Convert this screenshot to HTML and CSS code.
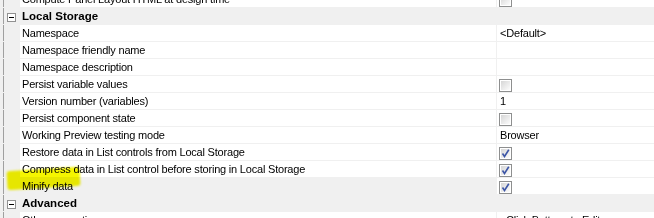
FILE: index.html
```html
<!DOCTYPE html>
<html lang="en">
<head>
  <meta charset="UTF-8" />
  <title>Property Grid</title>
  <link rel="stylesheet" href="styles.css">
</head>
<body>
  <svg width="0" height="0" class="defs">
    <defs>
      <linearGradient id="boxfill" x1="0" y1="0" x2="1" y2="1">
        <stop offset="0" stop-color="#d6d6d6"/>
        <stop offset="1" stop-color="#fcfcfc"/>
      </linearGradient>
      <symbol id="cb-off" viewBox="0 0 13 13">
        <rect x="0.5" y="0.5" width="12" height="12" fill="#fff" stroke="#8e8f8f"/>
        <rect x="2" y="2" width="9" height="9" fill="url(#boxfill)"/>
      </symbol>
      <symbol id="cb-on" viewBox="0 0 13 13">
        <rect x="0.5" y="0.5" width="12" height="12" fill="#fff" stroke="#8e8f8f"/>
        <rect x="2" y="2" width="9" height="9" fill="url(#boxfill)"/>
        <path d="M3.5 6.5 L5.5 9.5 L9.8 2.8" fill="none" stroke="#3d56a6" stroke-width="1.6"/>
      </symbol>
    </defs>
  </svg>

  <div class="grid">
    <div class="row">
      <div class="gutter"></div>
      <div class="name">Compute Panel Layout HTML at design time</div>
      <div class="value"><svg class="cb"><use href="#cb-off"/></svg></div>
    </div>

    <div class="row category">
      <div class="gutter"><span class="toggle"></span></div>
      <div class="name">Local Storage</div>
    </div>

    <div class="row">
      <div class="gutter"></div>
      <div class="name">Namespace</div>
      <div class="value">&lt;Default&gt;</div>
    </div>
    <div class="row">
      <div class="gutter"></div>
      <div class="name">Namespace friendly name</div>
      <div class="value"></div>
    </div>
    <div class="row">
      <div class="gutter"></div>
      <div class="name">Namespace description</div>
      <div class="value"></div>
    </div>
    <div class="row">
      <div class="gutter"></div>
      <div class="name">Persist variable values</div>
      <div class="value"><svg class="cb"><use href="#cb-off"/></svg></div>
    </div>
    <div class="row">
      <div class="gutter"></div>
      <div class="name">Version number (variables)</div>
      <div class="value">1</div>
    </div>
    <div class="row">
      <div class="gutter"></div>
      <div class="name">Persist component state</div>
      <div class="value"><svg class="cb"><use href="#cb-off"/></svg></div>
    </div>
    <div class="row">
      <div class="gutter"></div>
      <div class="name">Working Preview testing mode</div>
      <div class="value">Browser</div>
    </div>
    <div class="row">
      <div class="gutter"></div>
      <div class="name">Restore data in List controls from Local Storage</div>
      <div class="value"><svg class="cb"><use href="#cb-on"/></svg></div>
    </div>
    <div class="row">
      <div class="gutter"></div>
      <div class="name">Compress data in List control before storing in Local Storage</div>
      <div class="value"><svg class="cb"><use href="#cb-on"/></svg></div>
    </div>
    <div class="row selected">
      <div class="gutter"></div>
      <div class="name">Minify data</div>
      <div class="value"><svg class="cb"><use href="#cb-on"/></svg></div>
    </div>

    <div class="row category">
      <div class="gutter"><span class="toggle"></span></div>
      <div class="name">Advanced</div>
    </div>

    <div class="row">
      <div class="gutter"></div>
      <div class="name">Other properties</div>
      <div class="value button-value">Click Buttons to Edit</div>
    </div>

    <div class="marker"></div>
  </div>
</body>
</html>
```

FILE: styles.css
```css
body {
  margin: 0;
  background: #fff;
  font-family: "Liberation Sans", Arial, sans-serif;
  font-size: 11px;
  color: #000;
  overflow: hidden;
}

.defs {
  position: absolute;
}

.grid {
  position: relative;
  margin-top: -9px;
  width: 654px;
}

.row {
  display: flex;
  height: 16px;
  line-height: 16px;
  border-bottom: 1px solid #f0f0f0;
  white-space: nowrap;
}

.gutter {
  width: 20px;
  flex: none;
  position: relative;
  background: #f0f0f0;
  border-left: 3px solid #f0f0f0;
  box-sizing: border-box;
  box-shadow: inset 1px 0 0 #a0a0a0;
}

.name {
  width: 476px;
  flex: none;
  padding-left: 2px;
  box-sizing: border-box;
  letter-spacing: -0.2px;
  overflow: hidden;
}

.value {
  flex: 1;
  border-left: 1px solid #f0f0f0;
  padding-left: 3px;
  letter-spacing: -0.2px;
}

.cb {
  display: block;
  width: 13px;
  height: 13px;
  margin: 3px 0 0 -1px;
}

.category {
  background: #f0f0f0;
}

.category .name {
  font-weight: bold;
  font-size: 11.5px;
  letter-spacing: 0;
}

.toggle {
  position: absolute;
  left: 4px;
  top: 5px;
  width: 9px;
  height: 9px;
  box-sizing: border-box;
  border: 1px solid #919191;
  background: #fff;
}

.toggle::after {
  content: "";
  position: absolute;
  left: 1px;
  top: 3px;
  width: 5px;
  height: 1px;
  background: #000;
}

.selected .name {
  background: #f0f0f0;
}

.button-value {
  padding-left: 9px;
}

.marker {
  position: absolute;
  left: 7px;
  top: 178px;
  width: 73px;
  height: 19px;
  background: #f5f500;
  transform: rotate(-3.5deg);
  filter: blur(1px);
  border-radius: 3px;
  mix-blend-mode: multiply;
}
```
